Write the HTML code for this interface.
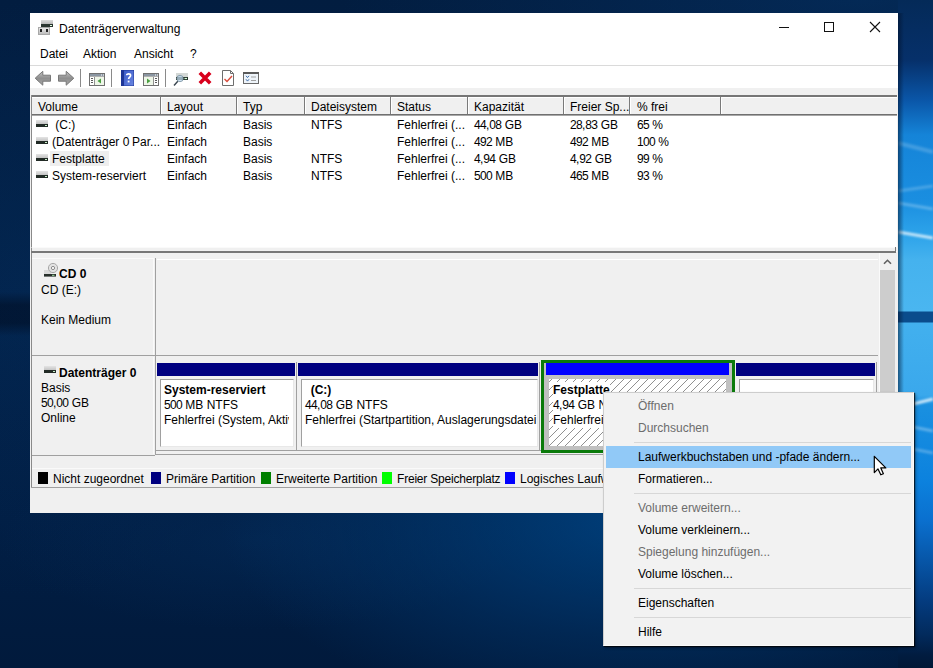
<!DOCTYPE html>
<html><head><meta charset="utf-8">
<style>
*{margin:0;padding:0;box-sizing:border-box}
html,body{width:933px;height:668px;overflow:hidden}
body{position:relative;font-family:"Liberation Sans",sans-serif;font-size:12px;color:#000;background:radial-gradient(ellipse 520px 130px at 860px 0px,rgba(6,56,112,0.45),rgba(6,56,112,0) 100%),linear-gradient(180deg,rgba(0,12,32,0) 292px,rgba(0,12,32,0.55) 305px,rgba(0,12,32,0.55) 323px,rgba(0,12,32,0) 336px),radial-gradient(ellipse 420px 200px at 640px 520px,rgba(0,70,135,0.8),rgba(0,62,122,0.35) 60%,rgba(0,62,122,0) 100%),radial-gradient(ellipse 260px 90px at 260px 540px,rgba(6,50,100,0.35),rgba(6,50,100,0) 100%),radial-gradient(ellipse 260px 300px at 40px 300px,rgba(5,50,100,0.25),rgba(5,50,100,0) 100%),linear-gradient(180deg,#021d40 0%,#02224a 45%,#011e44 78%,#011a3c 100%)}
.a{position:absolute}
.t{position:absolute;white-space:nowrap;line-height:17px;font-size:12px}
.b{font-weight:bold}
.g{color:#6d6d6d}
.d{letter-spacing:-0.67px}
#wall{position:absolute;left:898px;top:0;width:35px;height:668px;background:linear-gradient(180deg,#042a58 0px,#06306a 60px,#0a56a8 100px,#1584d8 135px,#1a8ee0 200px,#2ea4ea 236px,#45b2ee 260px,#4ab6f0 311px,#0a4c8c 312px,#0a4c8c 322px,#42b0ee 323px,#3aa8ec 395px,#1a90e0 405px,#0c82de 480px,#0a70cf 520px,#0756a8 560px,#043c80 600px,#022a5c 635px,#011c40 655px,#011836 668px)}
.hd{position:absolute;top:95px;height:21px;background:#f0f0f0;border-top:2px solid #767676;border-bottom:1px solid #a8a8a8;box-shadow:inset 0 1px 0 #fff,inset 0 -1px 0 #707070}
.col{position:absolute;top:97px;height:17px;width:2px;border-left:1px solid #7a7a7a;border-right:1px solid #fff}
.ico{position:absolute;width:12px;height:7px}
.ico::before{content:"";position:absolute;left:0;top:0;width:12px;height:4px;background:linear-gradient(#e4e4e4,#c4c4c4)}
.ico::after{content:"";position:absolute;left:0;top:4px;width:12px;height:3px;background:#222b26}
.led{position:absolute;width:2px;height:1px;background:#c8f0c8}
.lg{position:absolute;top:472px;width:10px;height:12px}
.mi{position:absolute;left:638px;white-space:nowrap;line-height:17px}
.sep{position:absolute;left:634px;width:277px;height:1px;background:#d7d7d7}
</style></head><body>
<div id="wall"></div>
<svg class="a" style="left:898px;top:0" width="35" height="668" viewBox="0 0 35 668">
<defs><filter id="bl" x="-20%" y="-50%" width="140%" height="200%"><feGaussianBlur stdDeviation="1.2"/></filter></defs>
<g filter="url(#bl)">
<path d="M0 143L35 152" stroke="rgba(255,255,255,0.18)" stroke-width="4"/>
<path d="M0 191L35 186" stroke="rgba(255,255,255,0.2)" stroke-width="3"/>
<path d="M0 203L35 209" stroke="rgba(255,255,255,0.25)" stroke-width="3"/>
<path d="M0 232L35 238" stroke="rgba(255,255,255,0.7)" stroke-width="3"/>
<path d="M15 404L35 399" stroke="rgba(255,255,255,0.75)" stroke-width="3"/>
<path d="M15 427L35 431" stroke="rgba(255,255,255,0.3)" stroke-width="3"/>
<path d="M15 449L35 453" stroke="rgba(255,255,255,0.25)" stroke-width="3"/>
</g>
<defs><linearGradient id="sh" x1="0" x2="1" y1="0" y2="0"><stop offset="0" stop-color="rgba(0,15,40,0.55)"/><stop offset="1" stop-color="rgba(0,15,40,0)"/></linearGradient></defs><rect x="0" y="13" width="6" height="500" fill="url(#sh)"/>
</svg>

<!-- window -->
<div class="a" style="left:30px;top:13px;width:868px;height:500px;background:#f0f0f0"></div>
<!-- title + menu + toolbar white -->
<div class="a" style="left:30px;top:13px;width:868px;height:75px;background:#fff"></div>
<div class="a" style="left:30px;top:65px;width:868px;height:1px;background:#dadada"></div>

<!-- title icon -->
<div class="a" style="left:41px;top:20px;width:12px;height:4px;background:linear-gradient(#dcdcdc,#b8b8b8)"></div>
<div class="a" style="left:41px;top:24px;width:12px;height:3px;background:#2a3530"></div>
<div class="a" style="left:50px;top:25px;width:2px;height:1px;background:#e0ffe0"></div>
<div class="a" style="left:38px;top:27px;width:12px;height:8px;background:linear-gradient(#e8e8e8,#bdbdbd);border:1px solid #a8a8a8"></div>
<div class="a" style="left:40px;top:29px;width:2px;height:3px;background:#222"></div>
<div class="a" style="left:46px;top:29px;width:2px;height:3px;background:#222"></div>
<div class="t" style="left:59px;top:21px">Datenträgerverwaltung</div>

<!-- caption buttons -->
<div class="a" style="left:779px;top:27px;width:10px;height:1px;background:#111"></div>
<div class="a" style="left:824px;top:22px;width:10px;height:10px;border:1px solid #111"></div>
<svg class="a" style="left:869px;top:21px" width="12" height="12" viewBox="0 0 12 12"><path d="M1 1L11 11M11 1L1 11" stroke="#111" stroke-width="1.1"/></svg>

<!-- menu -->
<div class="t" style="left:40px;top:46px">Datei</div>
<div class="t" style="left:83px;top:46px">Aktion</div>
<div class="t" style="left:134px;top:46px">Ansicht</div>
<div class="t" style="left:190px;top:46px">?</div>

<!-- toolbar icons -->
<svg class="a" style="left:34px;top:70px" width="18" height="17" viewBox="0 0 18 17"><defs><linearGradient id="ag" x1="0" y1="0" x2="0" y2="1"><stop offset="0" stop-color="#c4c4c4"/><stop offset="0.5" stop-color="#8e8e8e"/><stop offset="1" stop-color="#a8a8a8"/></linearGradient></defs><path d="M1.2 8.2L8.8 1.3V5.2H16.5V11.2H8.8V15.2Z" fill="url(#ag)" stroke="#777" stroke-width="1"/></svg>
<svg class="a" style="left:57px;top:70px" width="18" height="17" viewBox="0 0 18 17"><path d="M16.8 8.2L9.2 1.3V5.2H1.5V11.2H9.2V15.2Z" fill="url(#ag)" stroke="#777" stroke-width="1"/></svg>
<div class="a" style="left:80px;top:69px;width:1px;height:18px;background:#8a8a8a"></div>
<svg class="a" style="left:89px;top:73px" width="16" height="13" viewBox="0 0 16 13"><rect x="0.5" y="0.5" width="15" height="12" fill="#fff" stroke="#707070"/><rect x="1" y="1" width="14" height="2" fill="#8a96a2"/><rect x="12" y="1.5" width="1" height="1" fill="#fff"/><rect x="14" y="1.5" width="1" height="1" fill="#fff"/><path d="M1 3.5H15" stroke="#b0b0b0"/><path d="M5.5 4V12" stroke="#909090"/><path d="M2 5.5h2M2 7.5h2M2 9.5h2" stroke="#5a5a5a"/><rect x="6" y="4" width="9" height="8" fill="#eef6e8"/><path d="M12 5.5L8.5 8L12 10.5Z" fill="#4aa040"/></svg>
<div class="a" style="left:111px;top:69px;width:1px;height:18px;background:#8a8a8a"></div>
<svg class="a" style="left:121px;top:70px" width="13" height="16" viewBox="0 0 13 16"><defs><linearGradient id="bk" x1="0" y1="0" x2="1" y2="1"><stop offset="0" stop-color="#3a5ac8"/><stop offset="1" stop-color="#6a86e0"/></linearGradient></defs><rect x="0" y="0" width="13" height="16" fill="#1d3596"/><rect x="3" y="0.5" width="9.5" height="15" fill="url(#bk)"/><path d="M5.6 5.2C5.6 3.4 9.6 3.4 9.6 5.4C9.6 7 7.6 7.2 7.6 9" stroke="#fff" stroke-width="1.6" fill="none"/><rect x="6.7" y="10.6" width="1.8" height="1.8" fill="#fff"/></svg>
<svg class="a" style="left:143px;top:73px" width="16" height="13" viewBox="0 0 16 13"><rect x="0.5" y="0.5" width="15" height="12" fill="#fff" stroke="#707070"/><rect x="1" y="1" width="14" height="2" fill="#8a96a2"/><rect x="12" y="1.5" width="1" height="1" fill="#fff"/><rect x="14" y="1.5" width="1" height="1" fill="#fff"/><path d="M1 3.5H15" stroke="#b0b0b0"/><path d="M10.5 4V12" stroke="#909090"/><path d="M12 5.5h2M12 7.5h2M12 9.5h2" stroke="#5a5a5a"/><rect x="1" y="4" width="9" height="8" fill="#eef6e8"/><path d="M4 5.5L7.5 8L4 10.5Z" fill="#4aa040"/></svg>
<div class="a" style="left:165px;top:69px;width:1px;height:18px;background:#8a8a8a"></div>
<svg class="a" style="left:173px;top:72px" width="16" height="15" viewBox="0 0 16 15"><rect x="3" y="1" width="12" height="4" fill="#d4d8d6"/><rect x="3" y="5" width="12" height="3" fill="#25332b"/><path d="M11.5 6.5h2.5" stroke="#d8ffd8" stroke-width="1.2"/><circle cx="7" cy="6.5" r="3.2" fill="rgba(190,215,235,0.75)" stroke="#7890a0" stroke-width="0.8"/><path d="M1 13.5L4.8 9.2" stroke="#3a4650" stroke-width="1.4"/></svg>
<svg class="a" style="left:198px;top:71px" width="14" height="14" viewBox="0 0 14 14"><path d="M1.8 1.8L12.2 12.2M12.2 1.8L1.8 12.2" stroke="#d8001c" stroke-width="3.6"/></svg>
<svg class="a" style="left:222px;top:70px" width="12" height="16" viewBox="0 0 12 16"><path d="M0.5 0.5H8.5L11.5 3.5V15.5H0.5Z" fill="#fff" stroke="#6e6e6e"/><path d="M8.5 0.5V3.5H11.5" fill="none" stroke="#6e6e6e"/><path d="M2.5 9L5 11.5L10 6" stroke="#d84a3a" stroke-width="1.4" fill="none"/></svg>
<svg class="a" style="left:243px;top:72px" width="16" height="12" viewBox="0 0 16 12"><rect x="0.5" y="0.5" width="15" height="11" fill="#fff" stroke="#6a6a6a"/><rect x="0" y="0" width="16" height="2" fill="#5a5a5a"/><rect x="1" y="2" width="14" height="9" fill="#eef4fa"/><path d="M3 3.8L4.5 5.6L6 3.8M3 7.3L4.5 9.1L6 7.3" stroke="#3a6aa8" stroke-width="1" fill="none"/><path d="M8 5h5M8 8.5h5" stroke="#a0a0a0"/></svg>
<!-- list view -->
<div class="a" style="left:31px;top:95px;width:866px;height:157px;background:#fff;border-left:1px solid #8a8a8a"></div>
<div class="hd" style="left:32px;width:865px"></div>
<div class="col" style="left:160px"></div>
<div class="col" style="left:236px"></div>
<div class="col" style="left:304px"></div>
<div class="col" style="left:390px"></div>
<div class="col" style="left:467px"></div>
<div class="col" style="left:563px"></div>
<div class="col" style="left:629px"></div>
<div class="col" style="left:720px"></div>
<div class="t" style="left:38px;top:99px">Volume</div>
<div class="t" style="left:167px;top:99px">Layout</div>
<div class="t" style="left:243px;top:99px">Typ</div>
<div class="t" style="left:311px;top:99px">Dateisystem</div>
<div class="t" style="left:397px;top:99px">Status</div>
<div class="t" style="left:474px;top:99px">Kapazität</div>
<div class="t" style="left:570px;top:99px">Freier Sp...</div>
<div class="t" style="left:637px;top:99px">% frei</div>

<!-- rows -->
<div class="a" style="left:50px;top:151px;width:59px;height:15px;background:#eeeeee"></div>
<div id="rows">
<div class="ico" style="left:36px;top:120px"></div><div class="led" style="left:45px;top:125px"></div>
<div class="ico" style="left:36px;top:137px"></div><div class="led" style="left:45px;top:142px"></div>
<div class="ico" style="left:36px;top:154px"></div><div class="led" style="left:45px;top:159px"></div>
<div class="ico" style="left:36px;top:171px"></div><div class="led" style="left:45px;top:176px"></div>
<div class="t" style="left:52px;top:117px">&nbsp;(C:)</div>
<div class="t" style="left:52px;top:134px">(Datenträger <span class="d">0</span> Par...</div>
<div class="t" style="left:52px;top:151px">Festplatte</div>
<div class="t" style="left:52px;top:168px">System-reserviert</div>
<div class="t" style="left:167px;top:117px">Einfach</div><div class="t" style="left:167px;top:134px">Einfach</div><div class="t" style="left:167px;top:151px">Einfach</div><div class="t" style="left:167px;top:168px">Einfach</div>
<div class="t" style="left:243px;top:117px">Basis</div><div class="t" style="left:243px;top:134px">Basis</div><div class="t" style="left:243px;top:151px">Basis</div><div class="t" style="left:243px;top:168px">Basis</div>
<div class="t" style="left:311px;top:117px">NTFS</div><div class="t" style="left:311px;top:151px">NTFS</div><div class="t" style="left:311px;top:168px">NTFS</div>
<div class="t" style="left:397px;top:117px">Fehlerfrei (...</div><div class="t" style="left:397px;top:134px">Fehlerfrei (...</div><div class="t" style="left:397px;top:151px">Fehlerfrei (...</div><div class="t" style="left:397px;top:168px">Fehlerfrei (...</div>
<div class="t" style="left:474px;top:117px"><span class="d">44</span>,<span class="d">08</span> GB</div><div class="t" style="left:474px;top:134px"><span class="d">492</span> MB</div><div class="t" style="left:474px;top:151px"><span class="d">4</span>,<span class="d">94</span> GB</div><div class="t" style="left:474px;top:168px"><span class="d">500</span> MB</div>
<div class="t" style="left:570px;top:117px"><span class="d">28</span>,<span class="d">83</span> GB</div><div class="t" style="left:570px;top:134px"><span class="d">492</span> MB</div><div class="t" style="left:570px;top:151px"><span class="d">4</span>,<span class="d">92</span> GB</div><div class="t" style="left:570px;top:168px"><span class="d">465</span> MB</div>
<div class="t" style="left:637px;top:117px"><span class="d">65</span> %</div><div class="t" style="left:637px;top:134px"><span class="d">100</span> %</div><div class="t" style="left:637px;top:151px"><span class="d">99</span> %</div><div class="t" style="left:637px;top:168px"><span class="d">93</span> %</div>
</div>

<!-- splitter -->
<div class="a" style="left:31px;top:247px;width:866px;height:4px;background:#f0f0f0;border-left:1px solid #8a8a8a;border-top:1px solid #fafafa"></div>
<div class="a" style="left:31px;top:251px;width:865px;height:2px;background:#777"></div>

<!-- graphical view -->
<div class="a" style="left:31px;top:253px;width:1px;height:235px;background:#8a8a8a"></div>
<!-- CD0 label -->
<div class="a" style="left:155px;top:258px;width:1px;height:98px;background:#a0a0a0"></div>
<div class="a" style="left:32px;top:355px;width:846px;height:1px;background:#a0a0a0"></div>
<div class="a" style="left:157px;top:259px;width:721px;height:1px;background:#fff"></div>
<div class="a" style="left:32px;top:258px;width:122px;height:1px;background:#fafafa"></div>
<div class="a" style="left:153px;top:258px;width:1px;height:97px;background:#fafafa"></div>
<div class="a" style="left:153px;top:357px;width:1px;height:97px;background:#fafafa"></div>
<svg class="a" style="left:43px;top:262px" width="15" height="16" viewBox="0 0 15 16"><rect x="1" y="8" width="7" height="4" fill="#d8d8d8"/><circle cx="10" cy="6" r="4.6" fill="#e2e2e2" stroke="#a8a8a8" stroke-width="1"/><circle cx="10" cy="6" r="1.6" fill="#fff" stroke="#8a8a8a" stroke-width="1"/><rect x="1" y="12" width="12" height="2.6" fill="#262e2a"/><rect x="9" y="12.8" width="2.5" height="1" fill="#9fe09f"/></svg>
<div class="t b" style="left:59px;top:266px">CD <span class="d">0</span></div>
<div class="t" style="left:41px;top:282px">CD (E:)</div>
<div class="t" style="left:41px;top:312px">Kein Medium</div>

<!-- Disk0 -->
<div class="a" style="left:155px;top:356px;width:1px;height:99px;background:#a0a0a0"></div>
<div class="a" style="left:32px;top:455px;width:123px;height:1px;background:#a0a0a0"></div>
<div class="ico" style="left:44px;top:366px"></div><div class="led" style="left:53px;top:371px"></div>
<div class="t b" style="left:59px;top:365px">Datenträger <span class="d">0</span></div>
<div class="t" style="left:41px;top:380px">Basis</div>
<div class="t" style="left:41px;top:395px"><span class="d">50</span>,<span class="d">00</span> GB</div>
<div class="t" style="left:41px;top:410px">Online</div>

<!-- partitions -->
<div class="a" style="left:156px;top:356px;width:722px;height:99px;background:#f0f0f0"></div>
<div class="a" style="left:156px;top:454px;width:722px;height:1px;background:#a0a0a0"></div>
<div class="a" style="left:156px;top:450px;width:722px;height:1px;background:#a0a0a0"></div>
<!-- p1 -->
<div class="a" style="left:157px;top:363px;width:138px;height:13px;background:#000080"></div>
<div class="a" style="left:296px;top:362px;width:1px;height:89px;background:#a0a0a0"></div>
<div class="a" style="left:160px;top:379px;width:134px;height:68px;background:#fff;border:1px solid #a0a0a0;border-right-color:#e8e8e8;border-bottom-color:#e8e8e8"></div>
<div class="t b" style="left:164px;top:382px">System-reserviert</div>
<div class="t" style="left:164px;top:397px"><span class="d">500</span> MB NTFS</div>
<div class="t" style="left:164px;top:412px;width:125px;overflow:hidden">Fehlerfrei (System, Aktiv</div>
<!-- p2 -->
<div class="a" style="left:298px;top:363px;width:240px;height:13px;background:#000080"></div>
<div class="a" style="left:539px;top:362px;width:1px;height:89px;background:#a0a0a0"></div>
<div class="a" style="left:301px;top:379px;width:237px;height:68px;background:#fff;border:1px solid #a0a0a0;border-right-color:#e8e8e8;border-bottom-color:#e8e8e8"></div>
<div class="t b" style="left:304px;top:382px">&nbsp;&nbsp;(C:)</div>
<div class="t" style="left:305px;top:397px"><span class="d">44</span>,<span class="d">08</span> GB NTFS</div>
<div class="t" style="left:305px;top:412px;width:233px;overflow:hidden">Fehlerfrei (Startpartition, Auslagerungsdatei</div>
<!-- p3 selected -->
<div class="a" style="left:541px;top:360px;width:194px;height:93px;border:3px solid #0a7a0a;background:#c0c0c0"></div>
<div class="a" style="left:546px;top:363px;width:183px;height:12px;background:#0000ff"></div>
<svg class="a" style="left:549px;top:379px" width="177" height="67" viewBox="0 0 177 67">
<defs><pattern id="h" width="8" height="8" patternUnits="userSpaceOnUse" x="0" y="3"><rect width="8" height="8" fill="#fff"/><path d="M-1 9L9 -1" stroke="#909090" stroke-width="1"/></pattern></defs>
<rect width="177" height="67" fill="url(#h)"/></svg>
<div class="t b" style="left:553px;top:382px;background:#fff;line-height:15px;padding-top:1px;height:16px">Festplatte</div>
<div class="t" style="left:553px;top:397px;background:#fff;line-height:15px;padding-top:1px;height:16px"><span class="d">4</span>,<span class="d">94</span> GB NTFS</div>
<div class="t" style="left:553px;top:412px;background:#fff;line-height:15px;padding-top:1px;height:16px">Fehlerfrei (Logisches Laufwerk)</div>
<!-- p4 -->
<div class="a" style="left:736px;top:363px;width:139px;height:13px;background:#000080"></div>
<div class="a" style="left:876px;top:362px;width:1px;height:89px;background:#a0a0a0"></div>
<div class="a" style="left:739px;top:379px;width:135px;height:68px;background:#fff;border:1px solid #a0a0a0;border-right-color:#e8e8e8;border-bottom-color:#e8e8e8"></div>

<!-- scrollbar -->
<div class="a" style="left:879px;top:253px;width:17px;height:202px;background:#f0f0f0"></div>
<svg class="a" style="left:882px;top:257px" width="11" height="9" viewBox="0 0 11 9"><path d="M2 6.8L5.5 3.3L9 6.8" stroke="#606060" stroke-width="1.6" fill="none"/></svg>
<div class="a" style="left:879px;top:253px;width:1px;height:202px;background:#fafafa"></div>
<div class="a" style="left:895px;top:247px;width:1px;height:5px;background:#777"></div>
<div class="a" style="left:880px;top:270px;width:15px;height:185px;background:#cdcdcd"></div>

<!-- legend -->
<div class="a" style="left:32px;top:468px;width:865px;height:1px;background:#fafafa"></div>
<div class="a" style="left:31px;top:487px;width:866px;height:1px;background:#a0a0a0"></div>
<div class="lg" style="left:38px;background:#000"></div>
<div class="t" style="left:53px;top:471px">Nicht zugeordnet</div>
<div class="lg" style="left:151px;background:#000080"></div>
<div class="t" style="left:166px;top:471px">Primäre Partition</div>
<div class="lg" style="left:261px;background:#008000"></div>
<div class="t" style="left:276px;top:471px">Erweiterte Partition</div>
<div class="lg" style="left:382px;background:#00ff00"></div>
<div class="t" style="left:397px;top:471px;letter-spacing:-0.2px">Freier Speicherplatz</div>
<div class="lg" style="left:505px;background:#0000ff"></div>
<div class="t" style="left:520px;top:471px">Logisches Laufwerk</div>

<!-- context menu -->
<div class="a" style="left:603px;top:392px;width:311px;height:254px;background:#f2f2f2;border:1px solid #cdcdcd;border-right-color:#fafafa;border-bottom-color:#fafafa;box-shadow:1px 1px 1px rgba(0,0,0,0.7),2px 2px 3px rgba(0,0,0,0.3)"></div>
<div class="a" style="left:606px;top:446px;width:305px;height:22px;background:#91c9f7"></div>
<div class="mi g" style="left:638px;top:398px">Öffnen</div>
<div class="mi g" style="top:420px">Durchsuchen</div>
<div class="sep" style="top:442px"></div>
<div class="mi" style="top:449px">Laufwerkbuchstaben und -pfade ändern...</div>
<div class="mi" style="top:471px">Formatieren...</div>
<div class="sep" style="top:493px"></div>
<div class="mi g" style="top:500px">Volume erweitern...</div>
<div class="mi" style="top:522px">Volume verkleinern...</div>
<div class="mi g" style="top:544px">Spiegelung hinzufügen...</div>
<div class="mi" style="top:566px">Volume löschen...</div>
<div class="sep" style="top:588px"></div>
<div class="mi" style="top:595px">Eigenschaften</div>
<div class="sep" style="top:617px"></div>
<div class="mi" style="top:624px">Hilfe</div>

<!-- cursor -->
<svg class="a" style="left:873px;top:455px" width="16" height="22" viewBox="0 0 16 22"><path d="M1.3 1.3V17.6L5 13.9L7.8 19.8L10.4 18.7L7.8 12.9H12.8Z" fill="#fff" stroke="#000" stroke-width="1.2" stroke-linejoin="round"/></svg>
</body></html>
